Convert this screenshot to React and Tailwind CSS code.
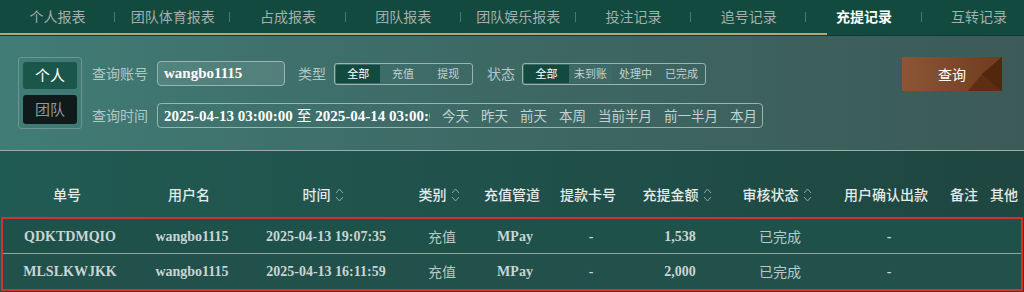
import React from 'react';

const tabs = ['个人报表', '团队体育报表', '占成报表', '团队报表', '团队娱乐报表', '投注记录', '追号记录', '充提记录', '互转记录'];

const cjk = { fontFamily: '"Noto Sans CJK SC", "Noto Sans", sans-serif' };
const serif = { fontFamily: '"Liberation Serif", "Noto Sans CJK SC", serif' };

const SortIcon = () => (
  <svg width="9" height="16" viewBox="0 0 9 16" className="ml-1 inline-block" fill="none" stroke="#8fa6a2" strokeWidth="1">
    <path d="M1 6l3.5-4L8 6" />
    <path d="M1 10l3.5 4L8 10" />
  </svg>
);

const columns = [
  { label: '单号' },
  { label: '用户名' },
  { label: '时间', sort: true },
  { label: '类别', sort: true },
  { label: '充值管道' },
  { label: '提款卡号' },
  { label: '充提金额', sort: true },
  { label: '审核状态', sort: true },
  { label: '用户确认出款' },
  { label: '备注' },
  { label: '其他' },
];

const rows = [
  ['QDKTDMQIO', 'wangbo1115', '2025-04-13 19:07:35', '充值', 'MPay', '-', '1,538', '已完成', '-'],
  ['MLSLKWJKK', 'wangbo1115', '2025-04-13 16:11:59', '充值', 'MPay', '-', '2,000', '已完成', '-'],
];

const gridCols = 'grid grid-cols-[134px_110px_158px_74px_72px_80px_98px_102px_116px_40px_40px]';

export default function App() {
  return (
    <div className="w-[1024px] h-[292px] overflow-hidden bg-[#1f4a45]" style={cjk}>
      {/* top tabs */}
      <div className="relative h-[36px] bg-[#124a3f]">
        <div className="flex h-[33px] items-center">
          {tabs.map((t, i) => (
            <div key={t} className="relative flex w-[115.2px] shrink-0 items-center justify-center">
              <span className={i === 7 ? 'text-[14px] font-bold text-white' : 'text-[14px] text-[#a3b0ac]'}>{t}</span>
              {i < tabs.length - 1 && <span className="absolute right-0 h-[10px] w-px bg-[#4f7670]" />}
            </div>
          ))}
        </div>
        <div className="absolute bottom-[1px] left-0 h-[2px] w-[827px] bg-[#b5a878]" />
        <div className="absolute bottom-0 left-0 h-px w-full bg-[#0f3a33]" />
      </div>

      {/* filter panel */}
      <div className="flex h-[115px] items-start border-b border-[#9aaeaa] bg-gradient-to-r from-[#417c76] via-[#3d6864] to-[#3c5a58] pl-[18px] pt-[21px]">
        <div className="flex w-[64px] flex-col gap-[6px] rounded-[3px] border border-[#6b9690] p-[4px]">
          <div className="flex h-[27px] items-center justify-center rounded-[3px] bg-[#1a5649] text-[15px] text-white">个人</div>
          <div className="flex h-[29px] items-center justify-center rounded-[3px] bg-[#111a1a] text-[15px] text-[#8f9a98]">团队</div>
        </div>

        <div className="ml-[10px] flex flex-col">
          <div className="flex h-[28px] items-center pt-[5px]">
            <span className="w-[65px] text-[14px] text-[#b4c6c2]">查询账号</span>
            <div className="flex h-[25px] w-[128px] items-center rounded-[4px] border border-[#9cb3af] bg-[#ffffff1a] px-[6px]">
              <span className="text-[15px] font-bold text-white" style={serif}>wangbo1115</span>
            </div>
            <span className="ml-[13px] text-[14px] text-[#b4c6c2]">类型</span>
            <div className="ml-[8px] flex h-[22px] w-[139px] items-center rounded-[3px] border border-[#9cb3af] p-px text-[11px]">
              <span className="flex h-full w-[45px] items-center justify-center bg-[#124a3f] text-white">全部</span>
              <span className="w-[46px] text-center text-[#c3d2cf]">充值</span>
              <span className="w-[46px] text-center text-[#c3d2cf]">提现</span>
            </div>
            <span className="ml-[14px] text-[14px] text-[#b4c6c2]">状态</span>
            <div className="ml-[7px] flex h-[22px] w-[184px] items-center rounded-[3px] border border-[#9cb3af] p-px text-[11px]">
              <span className="flex h-full w-[45px] items-center justify-center bg-[#124a3f] text-white">全部</span>
              <span className="flex h-full w-[43px] items-center justify-center bg-[#3e6a65] text-[#c3d2cf]">未到账</span>
              <span className="w-[47px] text-center text-[#c3d2cf]">处理中</span>
              <span className="w-[45px] text-center text-[#c3d2cf]">已完成</span>
            </div>
          </div>

          <div className="mt-[18px] flex h-[25px] items-center">
            <span className="w-[65px] text-[14px] text-[#b4c6c2]">查询时间</span>
            <div className="flex h-[25px] w-[606px] items-center rounded-[4px] border border-[#9cb3af] pl-[6px]">
              <div className="w-[266px] shrink-0 overflow-hidden whitespace-nowrap text-[15px] font-bold text-white" style={serif}>
                2025-04-13 03:00:00 <span style={cjk} className="font-normal">至</span> 2025-04-14 03:00:00
              </div>
              <div className="ml-[12px] flex shrink-0 items-center gap-[12px] whitespace-nowrap text-[13.5px] text-[#c3d2cf]">
                <span>今天</span>
                <span>昨天</span>
                <span>前天</span>
                <span>本周</span>
                <span>当前半月</span>
                <span>前一半月</span>
                <span>本月</span>
              </div>
            </div>
          </div>
        </div>

        <button className="relative ml-auto mr-[22px] flex h-[34px] w-[100px] items-center justify-center overflow-hidden bg-gradient-to-r from-[#8c5636] to-[#6f3c1f] text-[14px] text-white">
          <svg className="absolute right-0 top-0" width="34" height="34" viewBox="0 0 34 34">
            <polygon points="34,0 34,34 0,34 14,17" fill="#5a2a10" opacity="0.85" />
            <polygon points="34,0 14,17 34,34" fill="#4c220c" opacity="0.6" />
          </svg>
          <span className="relative">查询</span>
        </button>
      </div>

      {/* table */}
      <div className="bg-gradient-to-r from-[#205b53] to-[#1f4641]">
        <div className={`${gridCols} h-[66px] items-end pb-[12px]`}>
          {columns.map((c) => (
            <div key={c.label} className="flex items-center justify-center whitespace-nowrap text-[14px] font-medium text-[#e3ebe9]">
              {c.label}
              {c.sort && <SortIcon />}
            </div>
          ))}
        </div>
        <div className="mx-[1px] border-2 border-[#d3322a]">
          {rows.map((r, i) => (
            <div key={i} className={`${gridCols} h-[35px] items-center ${i === 0 ? 'border-b border-[#8ea4a0] bg-[#1f514b]' : 'bg-[#22504b]'}`}>
              {r.map((v, j) => {
                const isCjk = v === '充值' || v === '已完成';
                return (
                  <div
                    key={j}
                    className={`text-center whitespace-nowrap text-[14px] ${isCjk ? 'text-[#b9c9c5]' : 'font-bold text-[#c9d5d2]'}`}
                    style={isCjk ? cjk : serif}
                  >
                    {v}
                  </div>
                );
              })}
              <div />
              <div />
            </div>
          ))}
        </div>
      </div>
    </div>
  );
}
